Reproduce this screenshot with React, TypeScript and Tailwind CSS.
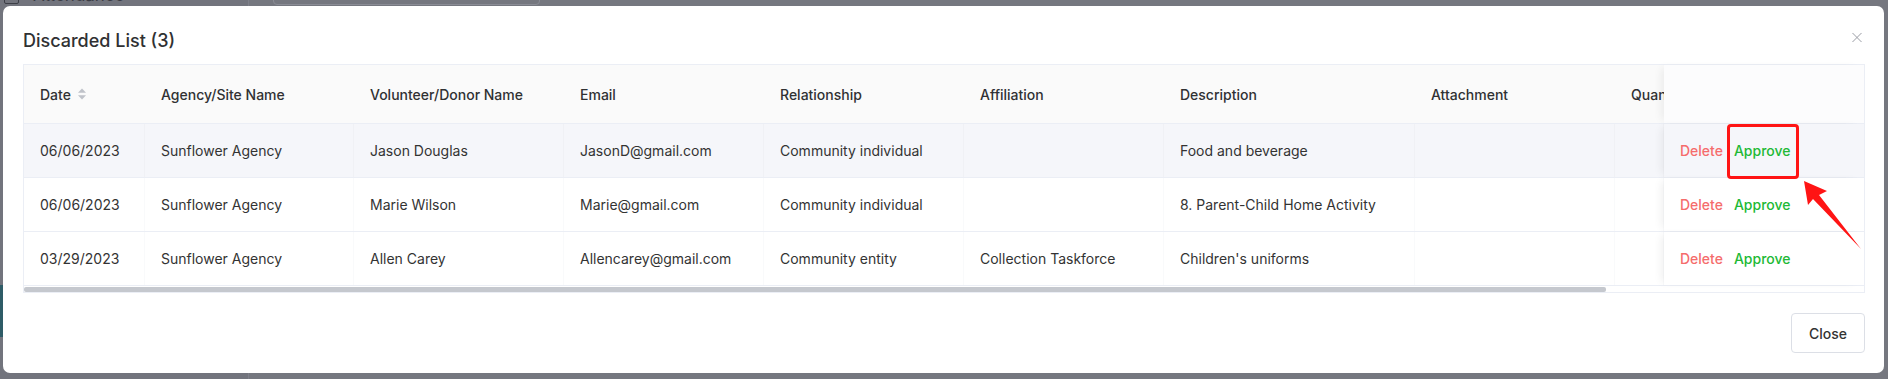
import React from "react";

type Col = { label: string; cls: string; sort?: boolean };

const cols: Col[] = [
  { label: "Date", cls: "w-[121px]", sort: true },
  { label: "Agency/Site Name", cls: "w-[209px]" },
  { label: "Volunteer/Donor Name", cls: "w-[210px]" },
  { label: "Email", cls: "w-[200px]" },
  { label: "Relationship", cls: "w-[200px]" },
  { label: "Affiliation", cls: "w-[200px]" },
  { label: "Description", cls: "w-[251px]" },
  { label: "Attachment", cls: "w-[200px]" },
  { label: "Quantity", cls: "w-[49px]" },
];

const rows: string[][] = [
  ["06/06/2023", "Sunflower Agency", "Jason Douglas", "JasonD@gmail.com", "Community individual", "", "Food and beverage", "", "1"],
  ["06/06/2023", "Sunflower Agency", "Marie Wilson", "Marie@gmail.com", "Community individual", "", "8. Parent-Child Home Activity", "", "1"],
  ["03/29/2023", "Sunflower Agency", "Allen Carey", "Allencarey@gmail.com", "Community entity", "Collection Taskforce", "Children's uniforms", "", "1"],
];

function SortIcon() {
  return (
    <svg width="10" height="14" viewBox="0 0 10 14" className="ml-[6px]">
      <path d="M5 1.5 L9 5.8 L1 5.8 Z" fill="#bfc2c9" />
      <path d="M5 12.5 L9 8.2 L1 8.2 Z" fill="#bfc2c9" />
    </svg>
  );
}

export default function App() {
  return (
    <div className="relative h-[379px] w-[1888px] overflow-hidden bg-[#75777f] font-[Inter,sans-serif]">
      {/* page behind the overlay */}
      <div className="absolute left-0 top-0 h-[379px] w-[248px] bg-[#72747d]" />
      <div className="absolute left-[248px] top-0 h-[379px] w-px bg-[#7e808a]" />
      <div className="absolute left-[273px] top-[-30px] h-[35px] w-[267px] rounded-[4px] border border-[#8a8c95]" />
      <div className="absolute left-[4px] top-[-12px] h-[16px] w-[15px] rounded-[2px] border border-[#3c3e46]" />
      <div className="absolute left-[33px] top-[-16px] text-[17px] leading-[22px] text-[#3a3c44]">Attendance</div>
      <div className="absolute left-[196px] top-[-16px] text-[17px] leading-[22px] text-[#3a3c44]">›</div>
      <div className="absolute left-0 top-[285px] h-[52px] w-[3px] bg-[#2f5c67]" />

      {/* modal */}
      <div className="relative ml-[3px] mt-[6px] h-[367px] w-[1881px] rounded-[7px] bg-white pl-[20px] pr-[19px] pt-[23px]">
        <div className="h-[24px] text-[18px] font-medium leading-[24px] text-[#303133]">Discarded List (3)</div>
        <button className="absolute right-[22px] top-[26px] flex h-[10px] w-[10px] items-center justify-center">
          <svg width="11" height="11" viewBox="0 0 11 11">
            <path d="M0.5 0.5 L10.5 10.5 M10.5 0.5 L0.5 10.5" stroke="#9a9da5" strokeWidth="1.1" />
          </svg>
        </button>

        {/* table */}
        <div className="mt-[11px] w-[1842px] border border-[#ebeef5] text-[14px] text-[#333]">
          <div className="flex h-[59px] border-b border-[#ebeef5] bg-[#fafafa]">
            {cols.map((c) => (
              <div
                key={c.label}
                className={`${c.cls} flex items-center overflow-hidden whitespace-nowrap pl-4 font-medium text-[#303133]`}
              >
                {c.label}
                {c.sort && <SortIcon />}
              </div>
            ))}
            <div className="relative z-10 w-[200px] bg-[#fcfcfd] shadow-[-6px_0_8px_-3px_rgba(0,0,0,0.06)]" />
          </div>
          {rows.map((r, i) => {
            const bg = i === 0 ? "bg-[#f5f6fa]" : "bg-white";
            const line = i === 0 ? "border-[#f0f1f5]" : "border-[#f9fafb]";
            return (
              <div key={i} className={`flex h-[54px] border-b border-[#ebeef5] ${bg}`}>
                {cols.map((c, j) => (
                  <div
                    key={j}
                    className={`${c.cls} flex items-center overflow-hidden whitespace-nowrap border-r ${line} pl-4`}
                  >
                    {j === 8 ? "" : r[j]}
                  </div>
                ))}
                <div
                  className={`relative z-10 flex w-[200px] items-center gap-[11px] pl-4 font-medium shadow-[-6px_0_8px_-3px_rgba(0,0,0,0.06)] ${bg}`}
                >
                  <span className="text-[#f56c6c]">Delete</span>
                  <span className="text-[#22b935]">Approve</span>
                </div>
              </div>
            );
          })}
          <div className="flex h-[6px] items-center">
            <div className="h-[5px] w-[1582px] rounded-[2px] bg-[#c5c8ce]" />
          </div>
        </div>

        <div className="mt-[20px] flex justify-end">
          <button className="h-[40px] w-[74px] rounded-[4px] border border-[#dcdfe6] bg-white text-[14px] font-medium text-[#333]">
            Close
          </button>
        </div>
      </div>

      {/* annotation */}
      <div className="absolute left-[1727px] top-[124px] z-20 h-[55px] w-[72px] rounded-[4px] border-[3px] border-[#ff1414]" />
      <svg className="pointer-events-none absolute left-0 top-0 z-20" width="1888" height="379" viewBox="0 0 1888 379">
        <polygon
          points="1804,181 1827,191 1819,195 1861,249 1813,199 1808,205"
          fill="#ff1414"
        />
      </svg>
    </div>
  );
}
